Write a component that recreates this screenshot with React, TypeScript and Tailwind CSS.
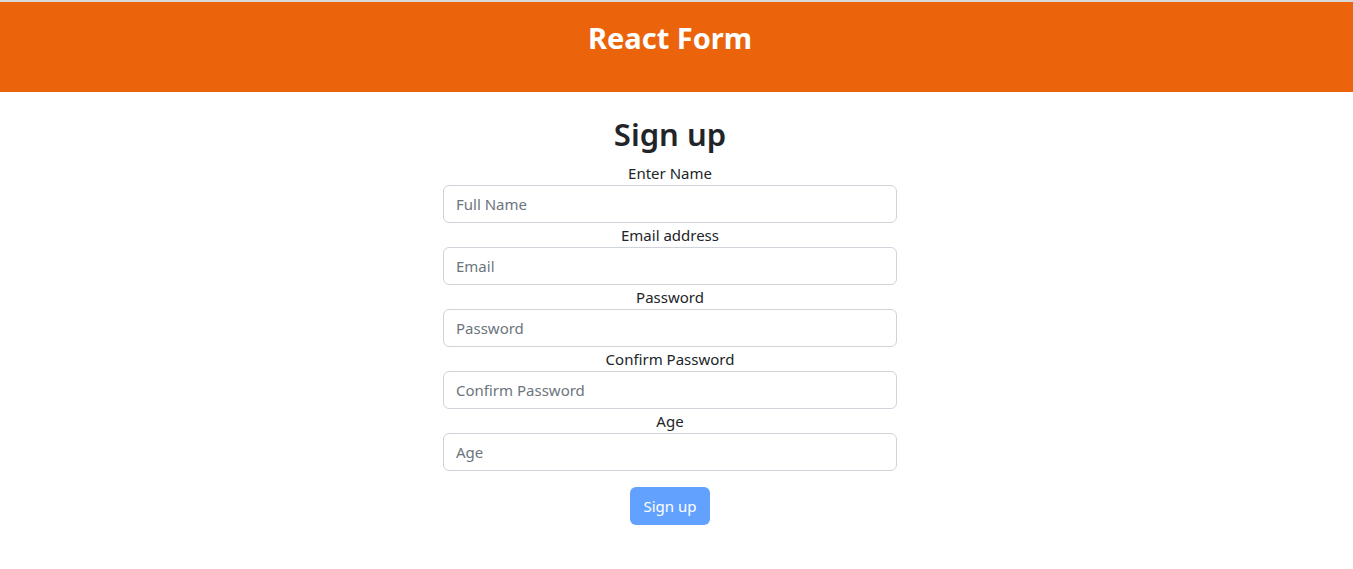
import React, { useState } from 'react';

const fields = [
  { label: 'Enter Name', placeholder: 'Full Name', type: 'text' },
  { label: 'Email address', placeholder: 'Email', type: 'email' },
  { label: 'Password', placeholder: 'Password', type: 'password' },
  { label: 'Confirm Password', placeholder: 'Confirm Password', type: 'password' },
  { label: 'Age', placeholder: 'Age', type: 'number' },
];

const App: React.FC = () => {
  const [values, setValues] = useState<string[]>(fields.map(() => ''));

  return (
    <div className="min-h-[569px] bg-white text-[#212529] font-['Noto_Sans',sans-serif]">
      {/* header */}
      <div className="border-t-2 border-[#d9d9d9]">
        <div className="h-[90px] bg-[#eb640b]">
          <div className="w-[1340px] flex justify-center pt-[16px]">
            <h1 className="text-[29px] font-bold text-white leading-[40px]">React Form</h1>
          </div>
        </div>
      </div>

      {/* form */}
      <div className="w-[1340px]">
        <form className="w-[454px] mx-auto pt-[23px] flex flex-col" onSubmit={(e) => e.preventDefault()}>
          <h2 className="text-[31px] font-semibold text-center leading-[38px] mb-[8px]">Sign up</h2>
          {fields.map((f, i) => (
            <div key={f.label} className="flex flex-col">
              <label className="text-[15px] leading-[24px] text-center">{f.label}</label>
              <input
                type={f.type}
                placeholder={f.placeholder}
                value={values[i]}
                onChange={(e) => {
                  const next = [...values];
                  next[i] = e.target.value;
                  setValues(next);
                }}
                className="h-[38px] w-full border border-[#ced4da] rounded-[6px] px-[12px] text-[15px] text-[#212529] placeholder:text-[#6c757d] outline-none"
              />
            </div>
          ))}
          <div className="flex justify-center mt-[16px]">
            <button
              type="submit"
              className="h-[38px] w-[80px] rounded-[6px] bg-[#62a2fe] text-white text-[15px]"
            >
              Sign up
            </button>
          </div>
        </form>
      </div>
    </div>
  );
};

export default App;
